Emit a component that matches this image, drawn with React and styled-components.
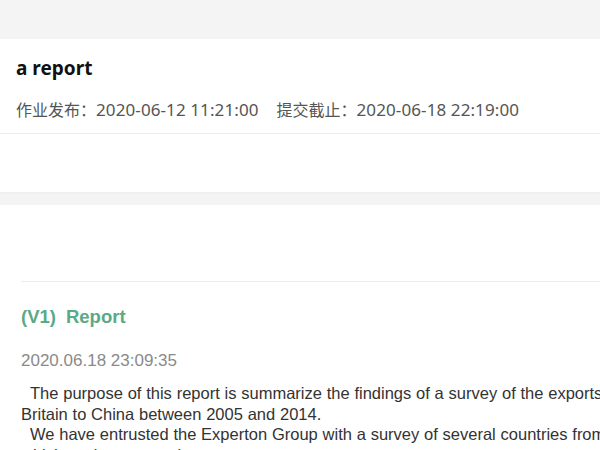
import React from 'react';
import styled, { createGlobalStyle } from 'styled-components';

const GlobalStyle = createGlobalStyle`
  html, body {
    margin: 0;
    padding: 0;
    background: #f4f4f4;
    overflow: hidden;
  }
  body {
    font-family: "Liberation Sans", Arial, sans-serif;
  }
`;

const homework = {
  title: 'a report',
  published: '2020-06-12 11:21:00',
  deadline: '2020-06-18 22:19:00',
};

const submission = {
  version: '(V1)',
  name: 'Report',
  time: '2020.06.18 23:09:35',
  paragraphs: [
    'The purpose of this report is summarize the findings of a survey of the exports from Britain to China between 2005 and 2014.',
    'We have entrusted the Experton Group with a survey of several countries from which we import goods.',
  ],
};

export default function App() {
  return (
    <Page>
      <GlobalStyle />
      <HeaderCard>
        <Title>{homework.title}</Title>
        <Meta>
          <MetaItem>作业发布：<Stamp>{homework.published}</Stamp></MetaItem>
          <MetaItem>提交截止：<Stamp>{homework.deadline}</Stamp></MetaItem>
        </Meta>
      </HeaderCard>

      <SubmitCard>
        <Divider />
        <VersionTitle>
          <Version>{submission.version}</Version>
          {submission.name}
        </VersionTitle>
        <SubmitTime>{submission.time}</SubmitTime>
        <Content>
          {submission.paragraphs.map((p, i) => (
            <Paragraph key={i}>{p}</Paragraph>
          ))}
        </Content>
      </SubmitCard>
    </Page>
  );
}

const Page = styled.div`
  width: 600px;
  height: 450px;
  overflow: hidden;
  padding-top: 39px;
  box-sizing: border-box;
`;

const HeaderCard = styled.div`
  background: #fff;
  height: 153px;
  box-sizing: border-box;
  padding-top: 17px;
  box-shadow: 0 1px 2px rgba(0, 0, 0, 0.04);
`;

const Title = styled.h1`
  margin: 0 0 19px 16px;
  font-family: "Noto Sans", "Noto Sans CJK SC", sans-serif;
  font-size: 19px;
  font-weight: 700;
  line-height: 24px;
  color: #111;
`;

const Meta = styled.div`
  display: flex;
  gap: 18px;
  padding: 0 0 12px 16px;
  border-bottom: 1px solid #ececec;
  font-family: "Noto Sans", "Noto Sans CJK SC", sans-serif;
  font-size: 16px;
  line-height: 22px;
  color: #555;
  white-space: nowrap;
`;

const MetaItem = styled.span``;

const Stamp = styled.span`
  font-size: 17px;
  letter-spacing: 0.1px;
`;

const SubmitCard = styled.div`
  margin-top: 13px;
  background: #fff;
  height: 300px;
  padding: 76px 0 0 21px;
  box-sizing: border-box;
  width: 700px;
`;

const Divider = styled.div`
  height: 1px;
  background: #ececec;
`;

const VersionTitle = styled.h2`
  margin: 23px 0 0;
  font-size: 18.5px;
  font-weight: 700;
  line-height: 24px;
  color: #5ba985;
`;

const Version = styled.span`
  margin-right: 10px;
`;

const SubmitTime = styled.div`
  margin-top: 22px;
  font-size: 17px;
  line-height: 20px;
  color: #8a8a8a;
`;

const Content = styled.div`
  margin-top: 12px;
  width: 625px;
  font-size: 16.5px;
  word-spacing: 0.2px;
  line-height: 20.5px;
  color: #333;
`;

const Paragraph = styled.p`
  margin: 0;
  text-indent: 9px;
`;
